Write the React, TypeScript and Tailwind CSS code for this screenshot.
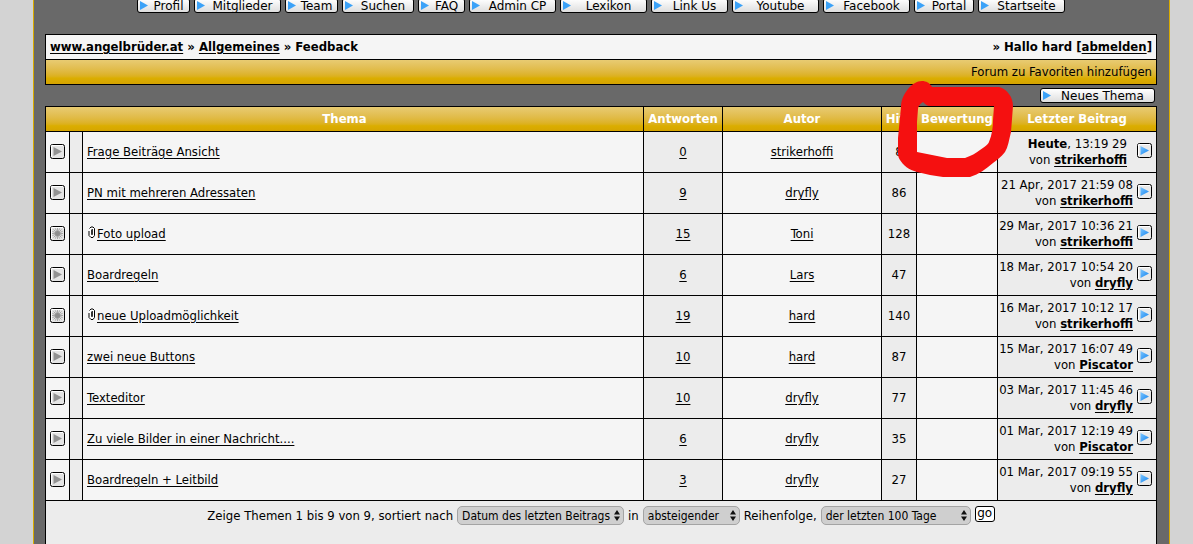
import React from "react";
import clsx from "clsx";

const navItems = [
  { label: "Profil", width: "w-[53px]" },
  { label: "Mitglieder", width: "w-[87px]" },
  { label: "Team", width: "w-[53px]" },
  { label: "Suchen", width: "w-[72px]" },
  { label: "FAQ", width: "w-[47px]" },
  { label: "Admin CP", width: "w-[87px]" },
  { label: "Lexikon", width: "w-[87px]" },
  { label: "Link Us", width: "w-[77px]" },
  { label: "Youtube", width: "w-[87px]" },
  { label: "Facebook", width: "w-[87px]" },
  { label: "Portal", width: "w-[60px]" },
  { label: "Startseite", width: "w-[87px]" },
];

const topics = [
  { title: "Frage Beiträge Ansicht", replies: 0, author: "strikerhoffi", hits: 8, day: "Heute", date: ", 13:19 29", last: "strikerhoffi" },
  { title: "PN mit mehreren Adressaten", replies: 9, author: "dryfly", hits: 86, date: "21 Apr, 2017 21:59 08", last: "strikerhoffi" },
  { title: "Foto upload", replies: 15, author: "Toni", hits: 128, date: "29 Mar, 2017 10:36 21", last: "strikerhoffi", hot: true, clip: true },
  { title: "Boardregeln", replies: 6, author: "Lars", hits: 47, date: "18 Mar, 2017 10:54 20", last: "dryfly" },
  { title: "neue Uploadmöglichkeit", replies: 19, author: "hard", hits: 140, date: "16 Mar, 2017 10:12 17", last: "strikerhoffi", hot: true, clip: true },
  { title: "zwei neue Buttons", replies: 10, author: "hard", hits: 87, date: "15 Mar, 2017 16:07 49", last: "Piscator" },
  { title: "Texteditor", replies: 10, author: "dryfly", hits: 77, date: "03 Mar, 2017 11:45 46", last: "dryfly" },
  { title: "Zu viele Bilder in einer Nachricht....", replies: 6, author: "dryfly", hits: 35, date: "01 Mar, 2017 12:19 49", last: "Piscator" },
  { title: "Boardregeln + Leitbild", replies: 3, author: "dryfly", hits: 27, date: "01 Mar, 2017 09:19 55", last: "dryfly" },
];

const gold = "bg-linear-to-b from-[#e8cb72] via-[#dbae00] via-75% to-[#d5a300]";

const ImageButton = ({ label, width }: { label: string; width: string }) => (
  <button
    className={clsx(
      "flex h-[15px] shrink-0 items-center rounded-[3px] border border-black bg-linear-to-b from-white to-[#dedede] pl-[2px] font-['DejaVu_Sans',sans-serif] text-[12px] leading-[12px] whitespace-nowrap text-black",
      width
    )}
  >
    <svg width="8" height="9" viewBox="0 0 8 9" className="shrink-0">
      <path d="M0 0L8 4.5L0 9Z" fill="#3ba2f8" />
    </svg>
    <span className="flex-1 text-center">{label}</span>
  </button>
);

const StatusIcon = ({ hot }: { hot?: boolean }) => (
  <svg width="15" height="15" viewBox="0 0 15 15" className="mx-auto block">
    <rect x="0.5" y="0.5" width="14" height="14" rx="2" fill="#e4e4e4" stroke="#000" />
    <path d="M1.5 13V1.5H13" fill="none" stroke="#fff" />
    {hot ? (
      <>
        <path
          d="M7.5 2V13M2 7.5H13M3.5 3.5L11.5 11.5M11.5 3.5L3.5 11.5M5.4 2.4L9.6 12.6M9.6 2.4L5.4 12.6M2.4 5.4L12.6 9.6M12.6 5.4L2.4 9.6"
          stroke="#8d8d8d"
          strokeWidth="0.7"
        />
        <circle cx="7.5" cy="7.5" r="2.5" fill="#8d8d8d" />
      </>
    ) : (
      <path d="M3.5 3L12 7.5L3.5 12Z" fill="#929292" />
    )}
  </svg>
);

const LastPostIcon = () => (
  <svg width="15" height="15" viewBox="0 0 15 15" className="block">
    <defs>
      <linearGradient id="arrow" x1="0" y1="0" x2="1" y2="1">
        <stop offset="0" stopColor="#7cc6ff" />
        <stop offset="1" stopColor="#1483ee" />
      </linearGradient>
    </defs>
    <rect x="0.5" y="0.5" width="14" height="14" rx="2" fill="#e9e9e9" stroke="#000" />
    <path d="M1.5 13V1.5H13" fill="none" stroke="#fff" />
    <path d="M3.5 3L12 7.5L3.5 12Z" fill="url(#arrow)" />
  </svg>
);

const ClipIcon = () => (
  <svg width="10" height="13" viewBox="0 0 10 13" className="mb-1 inline-block">
    <path d="M2.5 2.5L4 1H6L7.5 2.5V9.5L6 11.5H4L2 9.5V5" fill="#fff" stroke="#000" />
    <path d="M4.5 3.5V8.5H5.5V3" fill="none" stroke="#000" strokeWidth="0.8" />
  </svg>
);

const Select = ({ label, value, width }: { label: string; value: string; width: string }) => (
  <div className={clsx("relative", width)}>
    <select
      aria-label={label}
      className="block h-[19px] w-full appearance-none rounded-[5px] border border-[#a4a4a4] bg-[#cfcfcf] pl-1 text-[12px] leading-4 text-black"
    >
      <option>{value}</option>
    </select>
    <svg width="6" height="11" viewBox="0 0 6 11" className="pointer-events-none absolute top-1 right-1">
      <path d="M3 0L6 4.5H0ZM3 11L0 6.5H6Z" fill="#111" />
    </svg>
  </div>
);

const Link = ({ children }: { children: React.ReactNode }) => (
  <a href="#" className="underline underline-offset-2">
    {children}
  </a>
);

const App = () => {
  return (
    <div className="min-h-screen bg-[#d3d3d3] font-['DejaVu_Sans_Condensed','DejaVu_Sans',sans-serif] text-[13px] leading-4 text-black">
      <main className="mr-[23px] ml-[33px] flex min-h-screen flex-col overflow-hidden border-x border-[#d9ab00] bg-[#696969] pr-3 pl-[11px]">
        <nav className="-mt-[2px] flex shrink-0 justify-center gap-1">
          {navItems.map((item) => (
            <ImageButton key={item.label} label={item.label} width={item.width} />
          ))}
        </nav>

        <header className="mt-[21px] shrink-0 border border-black">
          <div className="flex h-6 items-center justify-between bg-[#f5f5f5] px-1 font-bold">
            <div>
              <Link>www.angelbrüder.at</Link> » <Link>Allgemeines</Link> » Feedback
            </div>
            <div>
              » Hallo hard [<Link>abmelden</Link>]
            </div>
          </div>
          <div className={clsx("flex h-[25px] items-center justify-end border-t border-black px-1", gold)}>
            Forum zu Favoriten hinzufügen
          </div>
        </header>

        <div className="flex shrink-0 justify-end py-[3px] pr-[2px]">
          <ImageButton label="Neues Thema" width="w-[115px]" />
        </div>

        <div className="relative shrink-0">
          <table className="w-full table-fixed border-collapse">
            <colgroup>
              <col className="w-6" />
              <col className="w-[13px]" />
              <col />
              <col className="w-[79px]" />
              <col className="w-[159px]" />
              <col className="w-[35px]" />
              <col className="w-[81px]" />
              <col className="w-[159px]" />
            </colgroup>
            <thead>
              <tr className={clsx("h-[25px] text-white", gold)}>
                <th colSpan={3} className="border border-black">Thema</th>
                <th className="border border-black">Antworten</th>
                <th className="border border-black">Autor</th>
                <th className="border border-black">Hits</th>
                <th className="border border-black">Bewertung</th>
                <th className="border border-black">Letzter Beitrag</th>
              </tr>
            </thead>
            <tbody>
              {topics.map((t) => (
                <tr key={t.title} className="h-[41px] bg-[#f5f5f5] text-center">
                  <td className="border border-black pb-[2px]">
                    <StatusIcon hot={t.hot} />
                  </td>
                  <td className="border border-black bg-[#ececec]"></td>
                  <td className="border border-black px-1 text-left">
                    {t.clip && <ClipIcon />}
                    <Link>{t.title}</Link>
                  </td>
                  <td className="border border-black bg-[#ececec]">
                    <Link>{t.replies}</Link>
                  </td>
                  <td className="border border-black">
                    <Link>{t.author}</Link>
                  </td>
                  <td className="border border-black bg-[#ececec]">{t.hits}</td>
                  <td className="border border-black"></td>
                  <td className="border border-black bg-[#ececec] pr-1">
                    <div className="flex items-center justify-end gap-1 text-right whitespace-nowrap">
                      <div className={clsx(t.day && "pr-[6px]")}>
                        {t.day && <b>{t.day}</b>}
                        {t.date}
                        <br />
                        von <b><Link>{t.last}</Link></b>
                      </div>
                      <a href="#" aria-label="Letzter Beitrag" className="pb-[3px]">
                        <LastPostIcon />
                      </a>
                    </div>
                  </td>
                </tr>
              ))}
            </tbody>
          </table>

          {/* red marker around the rating column */}
          <svg
            width="118"
            height="100"
            viewBox="0 0 118 100"
            className="pointer-events-none absolute -top-[26px] right-[143px]"
          >
            <path
              fillRule="evenodd"
              fill="#f51010"
              d="M26 1C30 1 34 3 36 7H103C111 9 117 17 117 26L115 52C113 60 112 67 109 72C105 77 101 80 97 83C90 89 83 94 74 97H47C38 96 30 94 21 92C13 90 7 85 4 80C2 77 2 75 2 72V58L5 27C5 20 8 14 12 9C16 4 21 1 26 1ZM27 22C24 24 22 26 22 29L21 42V72C31 74 41 76 51 78H69C75 76 80 73 84 70C88 67 92 65 93 62C96 55 97 47 97 40L98 26H34C31 26 29 24 27 22Z"
            />
          </svg>
        </div>

        <form className="flex flex-1 items-start justify-center gap-1 border-x border-black bg-[#ececec] pt-[5px] whitespace-nowrap">
          <span className="pt-[2px]">Zeige Themen 1 bis 9 von 9, sortiert nach</span>
          <Select label="Sortierfeld" value="Datum des letzten Beitrags" width="w-[167px]" />
          <span className="pt-[2px]">in</span>
          <Select label="Sortierrichtung" value="absteigender" width="w-[97px]" />
          <span className="pt-[2px]">Reihenfolge,</span>
          <Select label="Zeitraum" value="der letzten 100 Tage" width="w-[150px]" />
          <button
            type="button"
            className="flex h-4 w-5 items-center justify-center rounded-[3px] border border-black bg-white pb-[2px] font-['DejaVu_Sans',sans-serif] text-[12px] leading-3"
          >
            go
          </button>
        </form>
      </main>
    </div>
  );
};

export default App;
